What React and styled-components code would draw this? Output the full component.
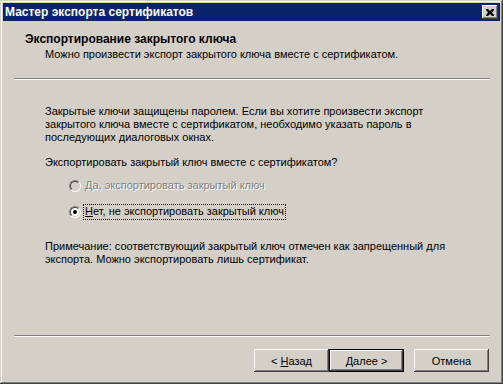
import React from 'react';
import styled, { createGlobalStyle } from 'styled-components';

const GlobalStyle = createGlobalStyle`
    html, body {
        margin: 0;
        padding: 0;
        background: #D4D0C8;
    }
    body {
        font-family: "Liberation Sans", Arial, sans-serif;
        font-size: 11px;
        color: #000;
    }
`;

const Window = styled.div`
    box-sizing: border-box;
    width: 503px;
    height: 384px;
    padding: 3px;
    background: #D4D0C8;
    box-shadow: inset -1px -1px #404040, inset 1px 1px #D4D0C8,
        inset -2px -2px #808080, inset 2px 2px #FFFFFF;
    display: flex;
    flex-direction: column;
`;

const TitleBar = styled.div`
    height: 18px;
    background: #0A246A;
    display: flex;
    align-items: center;
    justify-content: space-between;
    padding: 0 2px 0 2px;
`;

const TitleText = styled.span`
    color: #fff;
    font-weight: bold;
    font-size: 12px;
`;

const CloseButton = styled.div`
    box-sizing: border-box;
    width: 16px;
    height: 14px;
    background: #D4D0C8;
    box-shadow: inset -1px -1px #404040, inset 1px 1px #FFFFFF,
        inset -2px -2px #808080;
    display: flex;
    align-items: center;
    justify-content: center;
`;

const Header = styled.div`
    height: 57px;
    padding: 11px 0 0 22px;
    box-sizing: border-box;
`;

const HeaderTitle = styled.div`
    font-weight: bold;
    font-size: 12px;
    line-height: 14px;
`;

const HeaderSub = styled.div`
    line-height: 13px;
    margin: 2px 0 0 20px;
`;

const Separator = styled.div`
    height: 0;
    margin: 0 10px 0 11px;
    border-top: 1px solid #808080;
    border-bottom: 1px solid #FFFFFF;
`;

const Body = styled.div`
    flex: 1;
    padding: 25px 0 0 42px;
`;

const Para = styled.p`
    margin: 0 0 ${p => p.after ?? 12}px 0;
    line-height: 13px;
`;

const RadioGroup = styled.div`
    display: flex;
    flex-direction: column;
    gap: 9px;
    margin: 0 0 20px 24px;
`;

const RadioRow = styled.label`
    display: flex;
    align-items: center;
    height: 17px;
    color: ${p => (p.disabled ? '#808080' : '#000')};
    text-shadow: ${p => (p.disabled ? '1px 1px #FFFFFF' : 'none')};
`;

const RadioCircle = styled.span`
    box-sizing: border-box;
    width: 12px;
    height: 12px;
    border-radius: 50%;
    border: 1px solid;
    border-color: #808080 #FFFFFF #FFFFFF #808080;
    display: flex;
    margin-right: 2px;
`;

const RadioInner = styled.span`
    box-sizing: border-box;
    flex: 1;
    border-radius: 50%;
    border: 1px solid;
    border-color: #404040 #D4D0C8 #D4D0C8 #404040;
    background: ${p => (p.disabled ? '#D4D0C8' : '#FFFFFF')};
    display: flex;
    align-items: center;
    justify-content: center;
`;

const RadioDot = styled.span`
    width: 4px;
    height: 4px;
    border-radius: 50%;
    background: #000;
`;

const RadioLabel = styled.span`
    padding: 0 1px 1px 1px;
    line-height: 13px;
    border: 1px ${p => (p.focused ? 'dotted #000' : 'solid transparent')};
`;

const Footer = styled.div`
    display: flex;
    justify-content: flex-end;
    padding: 12px 11px 9px 0;
`;

const Button = styled.button`
    box-sizing: border-box;
    width: 75px;
    height: 23px;
    margin-left: ${p => p.gap || 0}px;
    padding: 0;
    font-family: "Liberation Sans", Arial, sans-serif;
    font-size: 11px;
    color: #000;
    background: #D4D0C8;
    border: ${p => (p.primary ? '1px solid #000' : 'none')};
    box-shadow: inset -1px -1px #404040, inset 1px 1px #FFFFFF,
        inset -2px -2px #808080;
`;

function Radio({ checked, disabled, focused, children }) {
    return (
        <RadioRow disabled={disabled}>
            <RadioCircle>
                <RadioInner disabled={disabled}>
                    {checked && <RadioDot />}
                </RadioInner>
            </RadioCircle>
            <RadioLabel focused={focused}>{children}</RadioLabel>
        </RadioRow>
    );
}

export default function App() {
    return (
        <>
            <GlobalStyle />
            <Window>
                <TitleBar>
                    <TitleText>Мастер экспорта сертификатов</TitleText>
                    <CloseButton>
                        <svg width="8" height="7" viewBox="0 0 8 7">
                            <path d="M0 0h2l2 2 2-2h2v1L6 3.5 8 6v1H6L4 5 2 7H0V6l2-2.5L0 1z" fill="#000" />
                        </svg>
                    </CloseButton>
                </TitleBar>
                <Header>
                    <HeaderTitle>Экспортирование закрытого ключа</HeaderTitle>
                    <HeaderSub>Можно произвести экспорт закрытого ключа вместе с сертификатом.</HeaderSub>
                </Header>
                <Separator />
                <Body>
                    <Para>
                        Закрытые ключи защищены паролем. Если вы хотите произвести экспорт<br />
                        закрытого ключа вместе с сертификатом, необходимо указать пароль в<br />
                        последующих диалоговых окнах.
                    </Para>
                    <Para after={8}>Экспортировать закрытый ключ вместе с сертификатом?</Para>
                    <RadioGroup>
                        <Radio disabled><u>Д</u>а, экспортировать закрытый ключ</Radio>
                        <Radio checked focused><u>Н</u>ет, не экспортировать закрытый ключ</Radio>
                    </RadioGroup>
                    <Para>
                        Примечание: соответствующий закрытый ключ отмечен как запрещенный для<br />
                        экспорта. Можно экспортировать лишь сертификат.
                    </Para>
                </Body>
                <Separator />
                <Footer>
                    <Button>&lt; <u>Н</u>азад</Button>
                    <Button primary>Далее &gt;</Button>
                    <Button gap={10}>Отмена</Button>
                </Footer>
            </Window>
        </>
    );
}
